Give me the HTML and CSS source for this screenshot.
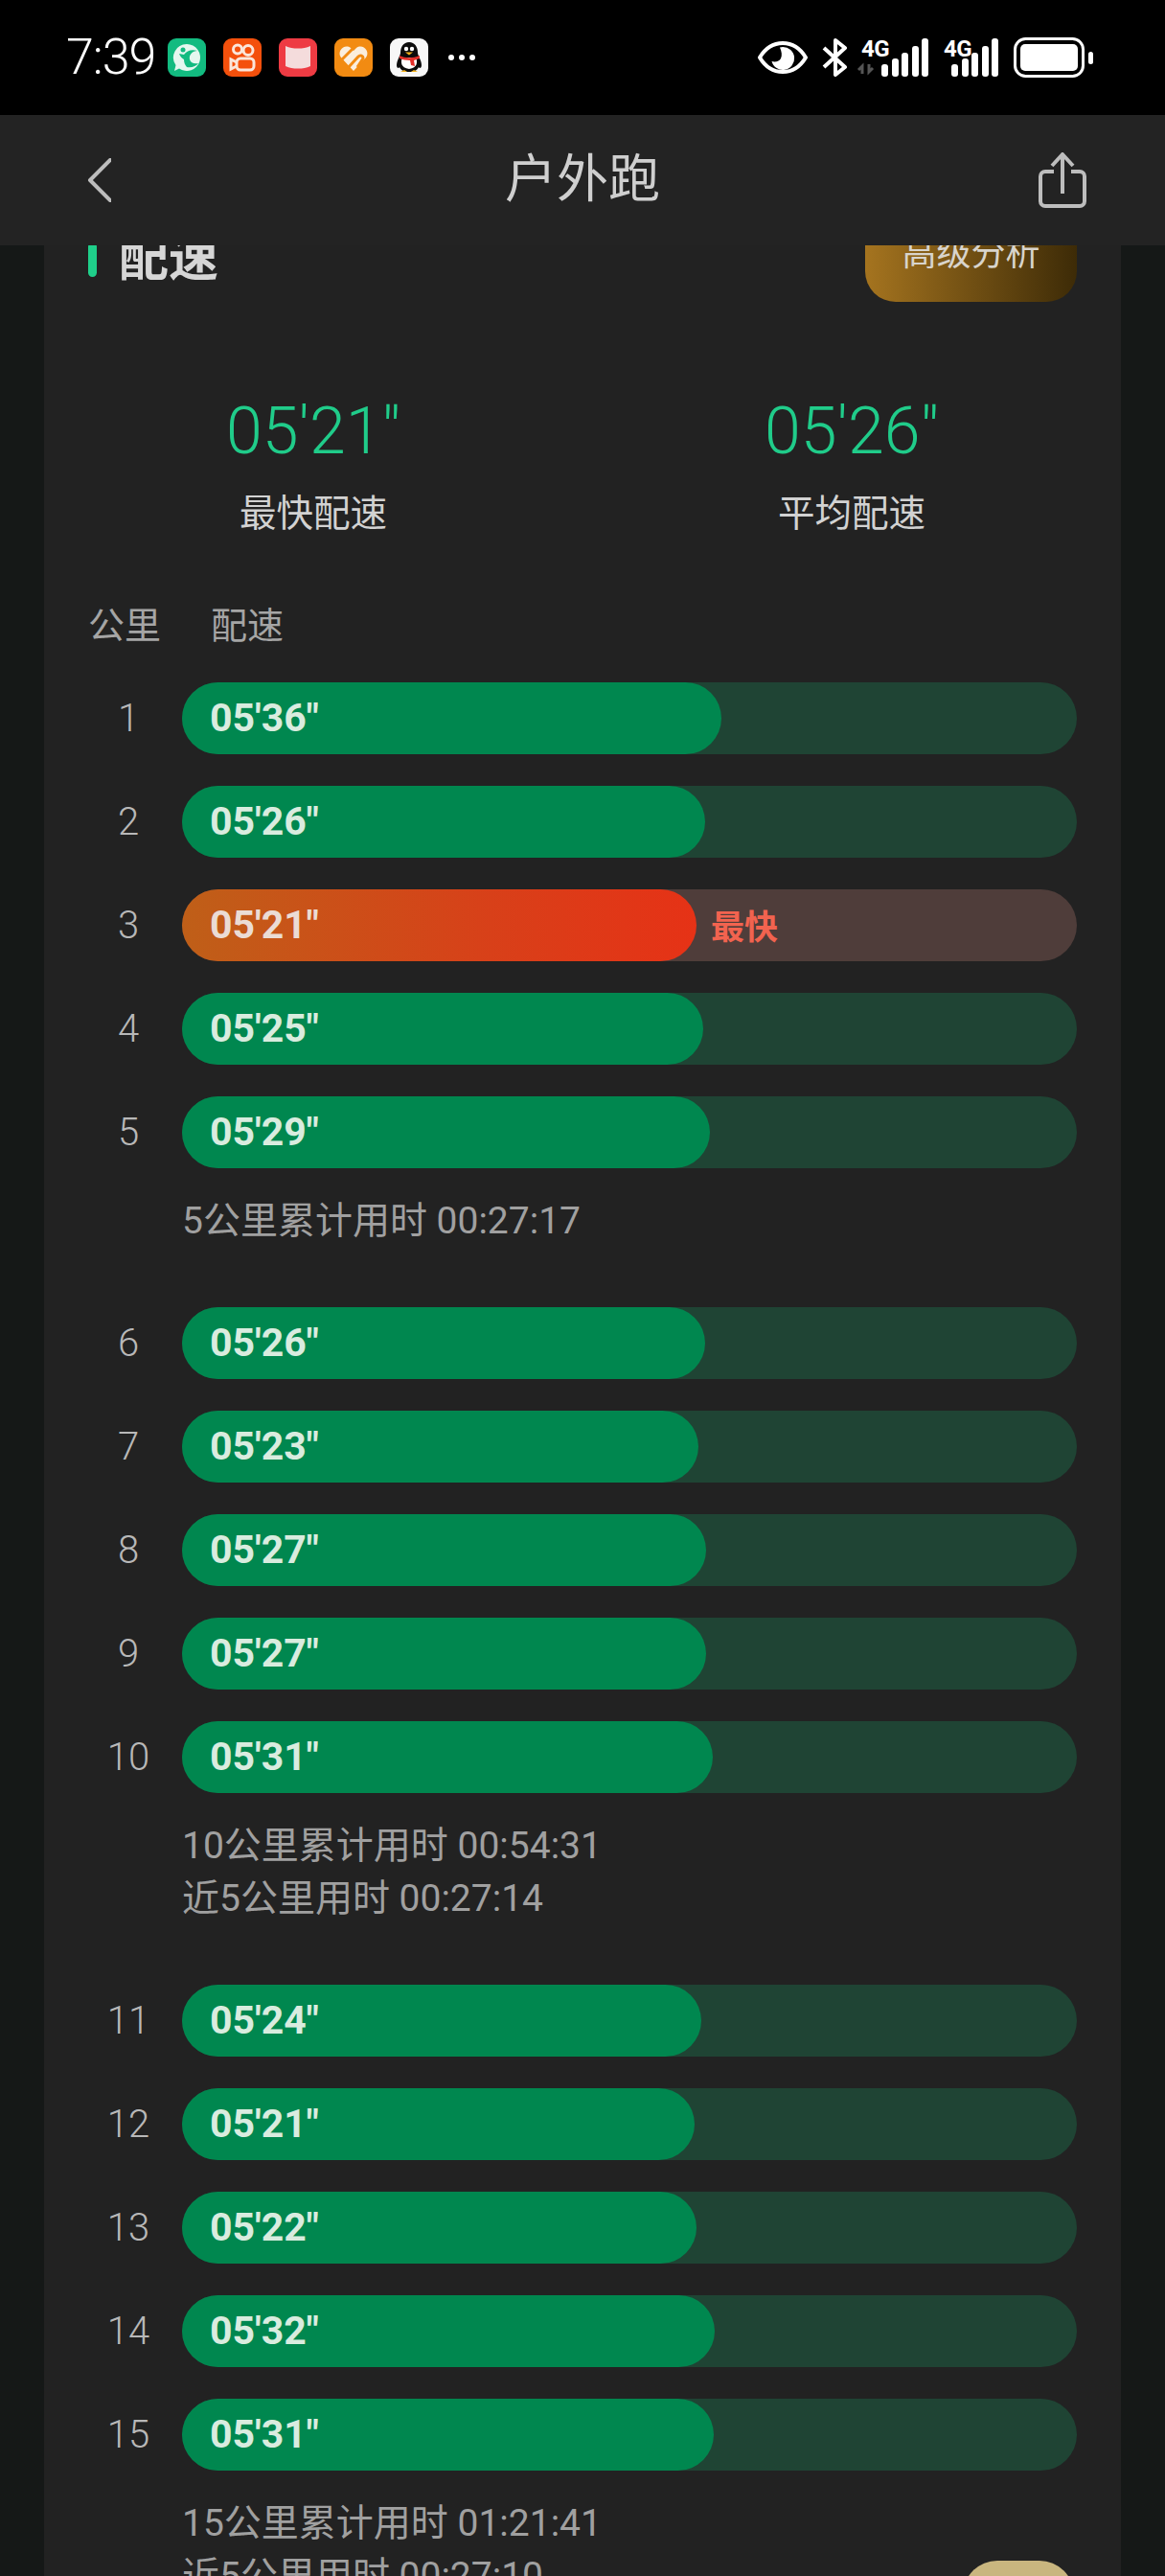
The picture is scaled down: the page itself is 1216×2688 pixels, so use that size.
FILE: index.html
```html
<!DOCTYPE html>
<html lang="zh-CN">
<head>
    <meta charset="UTF-8">
    <meta name="viewport" content="width=device-width, initial-scale=1.0">
    <title>户外跑</title>
    <link rel="stylesheet" href="styles.css">
</head>
<body>
    <div class="status-bar">
        <div class="status-left">
            <span class="time">7:39</span>
            <svg class="app-icon" viewBox="0 0 40 40">
                <rect width="40" height="40" rx="9" fill="#12bb80"/>
                <path d="M20 6a14 14 0 1 1-8 25.500L7 34l1.500-6A14 14 0 0 1 20 6z" fill="#e4f7ef"/>
                <path d="M31 13c-6-2-11 0-14 4l-5-1c1 3 3 5 5 6 0 3 1 6 3 8 5 1 10-1 12-4-4 1-8 0-9-4-1-5 3-9 8-9z" fill="#12bb80"/>
                <circle cx="16" cy="12" r="2.500" fill="#12bb80"/>
            </svg>
            <svg class="app-icon" viewBox="0 0 40 40">
                <rect width="40" height="40" rx="9" fill="#f4500c"/>
                <g fill="none" stroke="#fbe6da" stroke-width="3">
                    <circle cx="15" cy="11.500" r="4.500"/>
                    <circle cx="26" cy="12.500" r="5"/>
                    <rect x="14" y="21" width="18" height="12" rx="4"/>
                    <path d="M14 25l-6-3v10l6-3"/>
                </g>
            </svg>
            <svg class="app-icon" viewBox="0 0 40 40">
                <rect width="40" height="40" rx="9" fill="#ee3b43"/>
                <path d="M7 8c4 2 8 2.500 13 2.500S29 10 33 8v21c-4 2-8 2.500-13 2.500S11 31 7 29z" fill="#f4dcdc"/>
            </svg>
            <svg class="app-icon" viewBox="0 0 40 40">
                <rect width="40" height="40" rx="9" fill="#f28b12"/>
                <path d="M20 34L7 20c-5-7 4-15 10-10l3 3 3-3c6-5 15 3 10 10z" fill="#fbeedd"/>
                <path d="M6 24l13-13M14 31l11-12c2-2 5-1 5 2l-6 9" fill="none" stroke="#f28b12" stroke-width="3"/>
            </svg>
            <svg class="app-icon" viewBox="0 0 40 40">
                <rect width="40" height="40" rx="9" fill="#f7f7f7"/>
                <path d="M20 4c6 0 9 5 9 11 0 3 4 8 4 13 0 3-2 4-3 2-1 3-5 5-10 5s-9-2-10-5c-1 2-3 1-3-2 0-5 4-10 4-13 0-6 3-11 9-11z" fill="#0c0c0c"/>
                <path d="M13 20c-2 4-2 11 7 12 9-1 9-8 7-12z" fill="#fff"/>
                <circle cx="17" cy="11" r="2.200" fill="#fff"/>
                <circle cx="23" cy="11" r="2.200" fill="#fff"/>
                <path d="M16 14.500h8l-4 3z" fill="#f5b21a"/>
                <path d="M10 18c6 3 14 3 21 0v3l-6 2 1 6-4-1-1-5c-4 0-8-1-11-2z" fill="#e3302a"/>
                <path d="M11 35h7l-3-2zM22 35h7l-4-2z" fill="#f5b21a"/>
            </svg>
            <span class="dots"><i></i><i></i><i></i></span>
        </div>
        <div class="status-right">
            <svg class="eye" viewBox="0 0 52 36">
                <path d="M2 18C8 8 16 3 26 3s18 5 24 15c-6 10-14 15-24 15S8 28 2 18z" fill="none" stroke="#fff" stroke-width="4"/>
                <path d="M26 7a12 12 0 1 1-11.500 15c4 1 8 0 9.500-3s1-7-1-11.500c1-.3 2-.5 3-.5z" fill="#fff"/>
            </svg>
            <svg class="bluetooth" viewBox="0 0 28 40">
                <path d="M2 10l22 20-10 8V2l10 8L2 30" fill="none" stroke="#fff" stroke-width="4" stroke-linejoin="round"/>
            </svg>
            <svg class="signal signal-first" viewBox="0 0 70 40">
                <text class="net-label" x="0" y="19">4G</text>
                <path d="M1 37v-8l-4 4M8 27v8l4-4" fill="none" stroke="#555" stroke-width="3"/>
                <g fill="#fff">
                    <rect x="21" y="27" width="7" height="13" rx="3"/>
                    <rect x="32" y="21" width="7" height="19" rx="3"/>
                    <rect x="42" y="15" width="7" height="25" rx="3"/>
                    <rect x="53" y="8" width="7" height="32" rx="3"/>
                    <rect x="63" y="0" width="7" height="40" rx="3"/>
                </g>
            </svg>
            <svg class="signal" viewBox="0 0 57 40">
                <text class="net-label" x="0" y="19">4G</text>
                <g fill="#fff">
                    <rect x="8" y="27" width="7" height="13" rx="3"/>
                    <rect x="19" y="21" width="7" height="19" rx="3"/>
                    <rect x="29" y="15" width="7" height="25" rx="3"/>
                    <rect x="40" y="8" width="7" height="32" rx="3"/>
                    <rect x="50" y="0" width="7" height="40" rx="3"/>
                </g>
            </svg>
            <svg class="battery" viewBox="0 0 84 42">
                <rect x="1.500" y="1.500" width="71" height="39" rx="11" fill="none" stroke="#fff" stroke-width="3"/>
                <rect x="7" y="7" width="60" height="28" rx="5" fill="#fff"/>
                <rect x="78" y="15" width="5" height="13" rx="2.500" fill="#fff"/>
            </svg>
        </div>
    </div>

    <header class="top-bar">
        <svg class="back-icon" viewBox="0 0 34 46">
            <path d="M33 2L12 23l21 21" fill="none" stroke="#bdbdbd" stroke-width="4" stroke-linecap="round" stroke-linejoin="round"/>
        </svg>
        <h1 class="page-title">户外跑</h1>
        <svg class="share-icon" viewBox="0 0 50 58">
            <path d="M16 20H7a5 5 0 0 0-5 5v26a5 5 0 0 0 5 5h36a5 5 0 0 0 5-5V25a5 5 0 0 0-5-5h-9" fill="none" stroke="#bdbdbd" stroke-width="4"/>
            <path d="M25 43V3M14 14L25 2l11 12" fill="none" stroke="#bdbdbd" stroke-width="4" stroke-linejoin="round"/>
        </svg>
    </header>

    <main class="content">
        <section class="card">
            <div class="card-head">
                <div class="head-title">
                    <span class="marker"></span>
                    <h2>配速</h2>
                </div>
                <div class="pro-btn">高级分析</div>
            </div>

            <div class="stats">
                <div class="stat">
                    <div class="stat-value">05'21"</div>
                    <div class="stat-label">最快配速</div>
                </div>
                <div class="stat">
                    <div class="stat-value">05'26"</div>
                    <div class="stat-label">平均配速</div>
                </div>
            </div>

            <div class="table-head">
                <span>公里</span>
                <span>配速</span>
            </div>

            <div class="pace-list">
                <div class="row"><span class="km">1</span><div class="track"><div class="fill" style="width:563px">05'36"</div></div></div>
                <div class="row"><span class="km">2</span><div class="track"><div class="fill" style="width:546px">05'26"</div></div></div>
                <div class="row"><span class="km">3</span><div class="track track-best"><div class="fill" style="width:537px">05'21"</div><span class="best-tag">最快</span></div></div>
                <div class="row"><span class="km">4</span><div class="track"><div class="fill" style="width:544px">05'25"</div></div></div>
                <div class="row"><span class="km">5</span><div class="track"><div class="fill" style="width:551px">05'29"</div></div></div>
                <div class="note">
                    <p>5公里累计用时 00:27:17</p>
                </div>

                <div class="row"><span class="km">6</span><div class="track"><div class="fill" style="width:546px">05'26"</div></div></div>
                <div class="row"><span class="km">7</span><div class="track"><div class="fill" style="width:539px">05'23"</div></div></div>
                <div class="row"><span class="km">8</span><div class="track"><div class="fill" style="width:547px">05'27"</div></div></div>
                <div class="row"><span class="km">9</span><div class="track"><div class="fill" style="width:547px">05'27"</div></div></div>
                <div class="row"><span class="km">10</span><div class="track"><div class="fill" style="width:554px">05'31"</div></div></div>
                <div class="note">
                    <p>10公里累计用时 00:54:31</p>
                    <p>近5公里用时 00:27:14</p>
                </div>

                <div class="row"><span class="km">11</span><div class="track"><div class="fill" style="width:542px">05'24"</div></div></div>
                <div class="row"><span class="km">12</span><div class="track"><div class="fill" style="width:535px">05'21"</div></div></div>
                <div class="row"><span class="km">13</span><div class="track"><div class="fill" style="width:537px">05'22"</div></div></div>
                <div class="row"><span class="km">14</span><div class="track"><div class="fill" style="width:556px">05'32"</div></div></div>
                <div class="row"><span class="km">15</span><div class="track"><div class="fill" style="width:555px">05'31"</div></div></div>
                <div class="note">
                    <p>15公里累计用时 01:21:41</p>
                    <p>近5公里用时 00:27:10</p>
                </div>
            </div>
        </section>
        <div class="float-btn"></div>
    </main>
</body>
</html>
```

FILE: styles.css
```css
body {
    margin: 0;
    height: 100vh;
    display: flex;
    flex-direction: column;
    overflow: hidden;
    background: #151817;
    color: #ccc;
    font-family: Roboto, "Noto Sans CJK SC", sans-serif;
}

h1, h2, p {
    margin: 0;
    font-weight: normal;
}

/* status bar */
.status-bar {
    height: 120px;
    flex-shrink: 0;
    background: #000;
    display: flex;
    justify-content: space-between;
    align-items: center;
    padding: 0 74px 0 69px;
    box-sizing: border-box;
}

.status-left {
    display: flex;
    align-items: center;
    gap: 18px;
}

.time {
    color: #fff;
    font-size: 52px;
    font-weight: 300;
    letter-spacing: -1px;
    line-height: 60px;
    width: 88px;
}

.app-icon {
    width: 40px;
    height: 40px;
}

.dots {
    display: flex;
    gap: 5px;
    margin-left: 3px;
}

.dots i {
    width: 6px;
    height: 6px;
    border-radius: 50%;
    background: #fff;
}

.status-right {
    display: flex;
    align-items: center;
}

.eye {
    width: 52px;
    height: 36px;
    margin-right: 15px;
}

.bluetooth {
    width: 28px;
    height: 40px;
    margin-right: 13px;
}

.signal {
    height: 40px;
    width: 57px;
    overflow: visible;
}

.signal-first {
    width: 70px;
    margin-right: 16px;
}

.net-label {
    fill: #fff;
    font-family: Roboto, sans-serif;
    font-size: 24px;
    font-weight: 700;
    letter-spacing: -0.500px;
}

.battery {
    width: 84px;
    height: 42px;
    margin-left: 16px;
}

/* top bar */
.top-bar {
    height: 136px;
    flex-shrink: 0;
    background: #232323;
    display: grid;
    grid-template-columns: 1fr auto 1fr;
    align-items: center;
    padding: 0 82px;
}

.back-icon {
    width: 34px;
    height: 46px;
}

.page-title {
    font-size: 54px;
    line-height: 70px;
    color: #cfcfcf;
}

.share-icon {
    width: 50px;
    height: 58px;
    justify-self: end;
}

/* content */
.content {
    flex: 1;
    position: relative;
    overflow: hidden;
}

.card {
    margin: -41px 46px 0;
    background: #222;
}

.card-head {
    height: 100px;
    display: flex;
    justify-content: space-between;
    align-items: center;
    padding: 0 46px;
}

.head-title {
    display: flex;
    align-items: center;
    gap: 23px;
    padding-top: 12px;
}

.marker {
    width: 9px;
    height: 36px;
    border-radius: 5px;
    background: #1fcf8a;
}

.head-title h2 {
    font-size: 52px;
    line-height: 60px;
    font-weight: 700;
    color: #d6d6d6;
}

.pro-btn {
    width: 221px;
    height: 100px;
    border-radius: 32px;
    background: linear-gradient(90deg, #a5741f, #3d2b07);
    color: #d8d4cc;
    font-size: 36px;
    line-height: 100px;
    text-align: center;
}

.stats {
    display: grid;
    grid-template-columns: 1fr 1fr;
    margin-top: 95px;
    text-align: center;
}

.stat-value {
    font-size: 68px;
    line-height: 80px;
    font-weight: 300;
    color: #20cc8a;
}

.stat-label {
    margin-top: 21px;
    font-size: 38.500px;
    line-height: 50px;
    color: #d2d2d2;
}

.table-head {
    display: flex;
    gap: 52px;
    margin-top: 67px;
    padding: 0 46px;
    font-size: 38px;
    line-height: 50px;
    color: #a5a5a5;
}

.pace-list {
    margin-top: 34px;
    padding: 0 46px;
}

.row {
    display: flex;
    align-items: center;
    gap: 14px;
}

.row + .row {
    margin-top: 33px;
}

.km {
    width: 84px;
    text-align: center;
    font-size: 40px;
    font-weight: 300;
    color: #b8b8b8;
}

.track {
    flex: 1;
    height: 75px;
    border-radius: 38px;
    background: #1f4434;
    display: flex;
    align-items: center;
}

.fill {
    height: 100%;
    border-radius: 38px;
    background: #00874f;
    padding-left: 29px;
    box-sizing: border-box;
    font-size: 41px;
    font-weight: 700;
    line-height: 75px;
    color: #d9ecdf;
}

.track-best {
    background: #4f3d3a;
}

.track-best .fill {
    background: linear-gradient(90deg, #bf5f18, #d84019 60%, #e63216);
    color: #ebdcd4;
}

.best-tag {
    margin-left: 15px;
    margin-bottom: 2px;
    font-size: 35px;
    font-weight: 700;
    color: #f2634f;
}

.note {
    margin: 28px 0 62px 98px;
    font-size: 39px;
    line-height: 55px;
    color: #a0a0a0;
}

.float-btn {
    position: absolute;
    right: 95px;
    bottom: -100px;
    width: 116px;
    height: 116px;
    border-radius: 36px;
    background: #c9b67f;
}
```
